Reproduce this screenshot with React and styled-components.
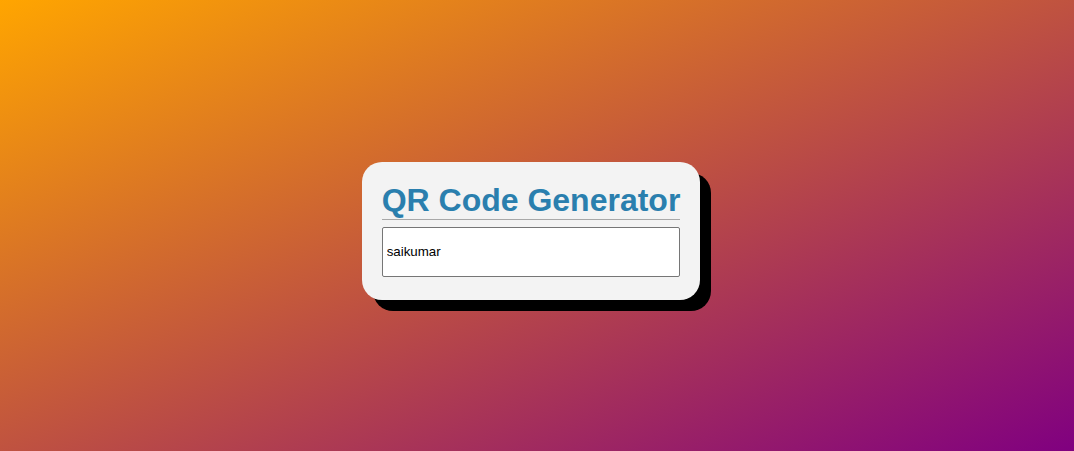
import React from "react";
import styled, { createGlobalStyle } from "styled-components";

const GlobalStyle = createGlobalStyle`
  html, body {
    margin: 0;
    padding: 0;
  }
  body {
    font-family: "Liberation Sans", Arial, sans-serif;
  }
`;

export default function App() {
  return (
    <>
      <GlobalStyle />
      <Page>
        <Card>
          <Title>QR Code Generator</Title>
          <TextInput type="text" defaultValue="saikumar" />
        </Card>
      </Page>
    </>
  );
}

const Page = styled.div`
  width: 100vw;
  height: 451px;
  box-sizing: border-box;
  padding: 10px 12px 0 0;
  display: flex;
  align-items: center;
  justify-content: center;
  background: linear-gradient(to bottom right, #ffa500, #800080);
  overflow: hidden;
`;

const Card = styled.div`
  background: #f3f3f3;
  border-radius: 20px;
  padding: 20px 20px 23px;
  box-shadow: 11px 11px 0 #000;
  display: flex;
  flex-direction: column;
`;

const Title = styled.h1`
  margin: 0;
  font-size: 32px;
  font-weight: 700;
  color: #2a7fae;
  line-height: 37px;
  border-bottom: 1px solid #a8a8a8;
  white-space: nowrap;
`;

const TextInput = styled.input`
  margin-top: 7px;
  height: 50px;
  box-sizing: border-box;
  padding: 0 4px;
  border: 1px solid #767676;
  border-radius: 2px;
  background: #fff;
  font-family: "Liberation Sans", Arial, sans-serif;
  font-size: 13.333px;
  color: #000;
  outline: none;
`;
